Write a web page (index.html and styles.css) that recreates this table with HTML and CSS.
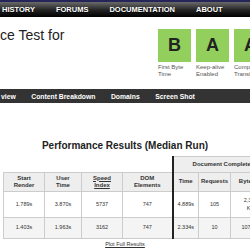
FILE: index.html
```html
<!DOCTYPE html>
<html>
<head>
<meta charset="utf-8">
<link rel="stylesheet" href="styles.css">
</head>
<body>
<div class="topnav">
  <span>HISTORY</span><span>FORUMS</span><span>DOCUMENTATION</span><span>ABOUT</span>
</div>
<div class="header">
  <h1 class="title">ce Test for</h1>
  <div class="grades">
    <div class="grade"><div class="box">B</div><div class="label">First Byte<br>Time</div></div>
    <div class="grade"><div class="box">A</div><div class="label">Keep-alive<br>Enabled</div></div>
    <div class="grade"><div class="box">A</div><div class="label">Compress<br>Transfer</div></div>
  </div>
</div>
<div class="tabs"><span>view</span><span>Content Breakdown</span><span>Domains</span><span>Screen Shot</span></div>
<h2 class="results-title">Performance Results (Median Run)</h2>
<table class="results">
  <colgroup>
    <col class="c1"><col class="c2"><col class="c3"><col class="c4"><col class="c5"><col class="c6"><col class="c7">
  </colgroup>
  <tr class="hrow1"><th class="empty" colspan="4"></th><th class="doc" colspan="3">Document Complete</th></tr>
  <tr class="hrow2"><th>Start<br>Render</th><th>User<br>Time</th><th><a class="ul">Speed<br>Index</a></th><th class="dom">DOM<br>Elements</th><th>Time</th><th>Requests</th><th>Bytes In</th></tr>
  <tr class="row1"><td>1.789s</td><td>3.870s</td><td>5737</td><td class="dom">747</td><td>4.889s</td><td>105</td><td>2,360<br>KB</td></tr>
  <tr class="row2"><td>1.403s</td><td>1.963s</td><td>3162</td><td class="dom">747</td><td>2.334s</td><td>10</td><td>107 KB</td></tr>
</table>
<div class="plot"><a class="ul">Plot Full Results</a></div>
</body>
</html>
```
FILE: styles.css
```css
html, body {
  margin: 0;
  padding: 0;
  overflow: hidden;
  width: 250px;
  height: 250px;
  background: #fff;
  font-family: "Liberation Sans", Arial, sans-serif;
  color: #222;
}
.topnav {
  height: 15px;
  border-top: 2px solid #25255a;
  background: linear-gradient(#6a6a6a, #222 55%, #000);
  display: flex;
  align-items: center;
  gap: 21px;
  padding-left: 2px;
  white-space: nowrap;
}
.topnav span {
  color: #fff;
  font-weight: bold;
  font-size: 7.5px;
  text-shadow: 0 1px 1px #000;
}
.header {
  display: grid;
  grid-template-columns: 158px auto;
  padding-top: 10px;
}
.title {
  margin: 0;
  font-weight: normal;
  font-size: 14px;
  line-height: 16px;
  color: #222;
  white-space: nowrap;
}
.grades {
  display: flex;
  gap: 5px;
  margin-top: 2px;
  white-space: nowrap;
}
.grade {
  width: 33px;
  flex-shrink: 0;
}
.box {
  width: 33px;
  height: 33px;
  background: #92cf5c;
  color: #222;
  font-weight: bold;
  font-size: 18px;
  display: flex;
  align-items: center;
  justify-content: center;
}
.label {
  margin-top: 2px;
  font-size: 6px;
  line-height: 7px;
  color: #555;
}
.tabs {
  margin-top: 11px;
  height: 14px;
  background: #333;
  display: flex;
  align-items: center;
  gap: 15.5px;
  padding-left: 1px;
  white-space: nowrap;
}
.tabs span {
  color: #fff;
  font-weight: bold;
  font-size: 6.8px;
}
.results-title {
  margin: 37px 0 0;
  text-align: center;
  font-size: 10px;
  line-height: 12px;
  font-weight: bold;
  color: #222;
}
.results {
  margin: 4px 0 0 3px;
  border-collapse: collapse;
  table-layout: fixed;
  width: 267px;
  font-size: 5.5px;
}
.c1 { width: 41px; }
.c2 { width: 37px; }
.c3 { width: 41px; }
.c4 { width: 50px; }
.c5 { width: 26px; }
.c6 { width: 32px; }
.c7 { width: 40px; }
.results th, .results td {
  border: 1px solid #ccc;
  text-align: center;
  padding: 0;
  color: #333;
}
.results th {
  background: #eee;
  font-weight: bold;
  font-size: 6px;
  line-height: 7.5px;
  color: #333;
}
.results th.empty {
  background: transparent;
  border: none;
  border-bottom: 1px solid #ccc;
}
.results th.doc {
  border-left: 2px solid #222;
}
.results .dom {
  border-right: 2px solid #222;
}
.hrow1 th { height: 15px; }
.hrow2 th { height: 18px; }
.row1 td { height: 25px; background: #fff; line-height: 7.5px; }
.row2 td { height: 20px; background: #f4f4f4; line-height: 7.5px; }
.ul {
  text-decoration: underline;
  color: #333;
}
.plot {
  text-align: center;
  font-size: 5.5px;
  margin-top: 2px;
}
```
